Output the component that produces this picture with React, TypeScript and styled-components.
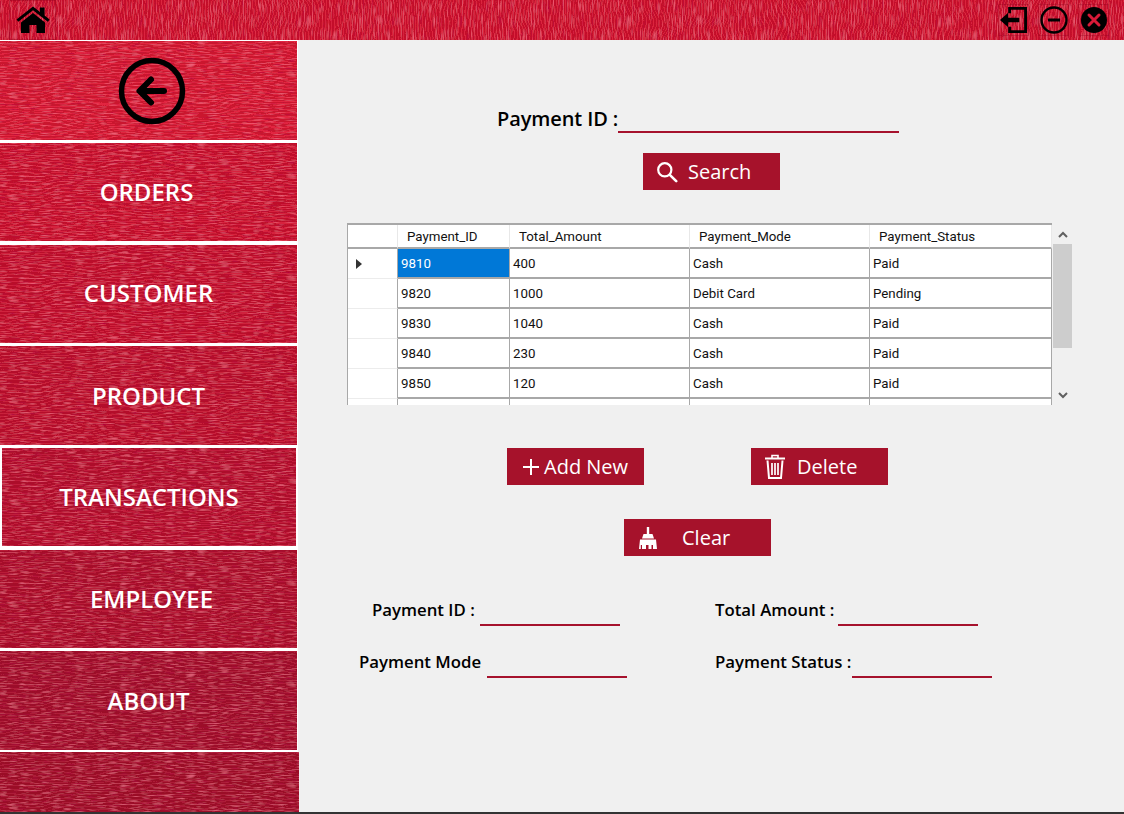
import React from 'react';
import styled, { createGlobalStyle } from 'styled-components';

const GlobalStyle = createGlobalStyle`
  html, body {
    margin: 0;
    padding: 0;
    background: #f0f0f0;
    font-family: "Open Sans", sans-serif;
  }
  * { box-sizing: border-box; }
`;

const menu = [
  { label: '', h: 99, gap: 1, tone: '#e01733', shift: 3, lift: 0 },
  { label: 'ORDERS', h: 98, gap: 3, tone: '#d41431', shift: -2, lift: -1 },
  { label: 'CUSTOMER', h: 98, gap: 4, tone: '#cd1330', shift: 0, lift: -2 },
  { label: 'PRODUCT', h: 99, gap: 3, tone: '#c6122f', shift: 0, lift: 0 },
  { label: 'TRANSACTIONS', h: 98, gap: 3, tone: '#be112e', shift: 0, lift: -1, active: true },
  { label: 'EMPLOYEE', h: 98, gap: 4, tone: '#b5112d', shift: 3, lift: -1 },
  { label: 'ABOUT', h: 99, gap: 3, tone: '#aa112d', shift: 0, lift: 0 },
];

const rows = [
  ['9810', '400', 'Cash', 'Paid'],
  ['9820', '1000', 'Debit Card', 'Pending'],
  ['9830', '1040', 'Cash', 'Paid'],
  ['9840', '230', 'Cash', 'Paid'],
  ['9850', '120', 'Cash', 'Paid'],
  ['', '', '', ''],
];

const grainStages = (freq: string, seed: number) => (
  <>
    <feTurbulence type="fractalNoise" baseFrequency="0.014 0.03" numOctaves="2" seed={seed} result="wave" />
    <feDisplacementMap in="SourceGraphic" in2="wave" scale="22" xChannelSelector="R" yChannelSelector="G" result="ridges" />
    <feTurbulence type="fractalNoise" baseFrequency={freq} numOctaves="2" seed={seed + 2} result="n" />
    <feColorMatrix in="n" type="matrix" values="0 0 0 0 1  0 0 0 0 0.2  0 0 0 0 0.3  1.5 0 0 0 -0.78" result="light" />
    <feColorMatrix in="n" type="matrix" values="0 0 0 0 0.45  0 0 0 0 0  0 0 0 0 0.06  0 -1.6 0 0 0.72" result="dark" />
    <feMerge>
      <feMergeNode in="ridges" />
      <feMergeNode in="dark" />
      <feMergeNode in="light" />
    </feMerge>
  </>
);

const App = () => {
  return (
    <>
      <GlobalStyle />
      <Filters aria-hidden="true">
        <filter id="grainH" x="0" y="0" width="100%" height="100%">
          {grainStages('0.09 0.8', 7)}
        </filter>
        <filter id="grainV" x="0" y="0" width="100%" height="100%">
          {grainStages('0.8 0.07', 3)}
        </filter>
      </Filters>
      <Window>
        <TopBar>
          <HomeButton>
            <svg width="36" height="30" viewBox="0 0 36 30">
              <path d="M1.500 15.500 18 2.500l7 5.400V3.500h4.600v8l5 4-1.800 2.200L18 6.200 3.300 17.700z" fill="#000" />
              <path d="M6 18.500 18 9l12 9.500V29h-8.500v-8h-7v8H6z" fill="#000" />
            </svg>
          </HomeButton>
          <WindowButtons>
            <WinButton>
              <svg width="30" height="28" viewBox="0 0 30 28">
                <path d="M11 7V2h16.500v24H11v-5" fill="none" stroke="#000" strokeWidth="3" />
                <path d="M1 14 9.500 6.500v5.300H21v4.400H9.500v5.300z" fill="#000" />
              </svg>
            </WinButton>
            <WinButton>
              <svg width="28" height="28" viewBox="0 0 28 28" fill="none" stroke="#000">
                <circle cx="14" cy="14" r="12.500" strokeWidth="2.400" />
                <path d="M8 14h12" strokeWidth="3" />
              </svg>
            </WinButton>
            <WinButton>
              <svg width="28" height="28" viewBox="0 0 28 28">
                <circle cx="14" cy="14" r="13" fill="#000" />
                <path d="m9 9 10 10M19 9 9 19" stroke="#d81a38" strokeWidth="3" strokeLinecap="round" />
              </svg>
            </WinButton>
          </WindowButtons>
        </TopBar>
        <Body>
          <Sidebar>
            {menu.map((item, i) => (
              <MenuItem key={i} $h={item.h} $gap={item.gap} $tone={item.tone} $active={item.active} $shift={item.shift} $lift={item.lift}>
                {item.label ? (
                  <span>{item.label}</span>
                ) : (
                  <svg width="68" height="68" viewBox="0 0 68 68" fill="none" stroke="#000">
                    <circle cx="34" cy="34" r="30.500" strokeWidth="5.500" />
                    <path d="M46 34H25" strokeWidth="6" strokeLinecap="round" />
                    <path d="M33 22.500 21.500 34 33 45.500" strokeWidth="6" strokeLinecap="round" strokeLinejoin="round" />
                  </svg>
                )}
              </MenuItem>
            ))}
            <SidebarEnd />
          </Sidebar>
          <Main>
            <SearchRow>
              <SearchLabel>Payment ID :</SearchLabel>
              <SearchLine />
            </SearchRow>
            <SearchButton>
              <svg width="22" height="22" viewBox="0 0 22 22" fill="none" stroke="#fff" strokeWidth="2.200">
                <circle cx="8.800" cy="8.800" r="6.600" />
                <path d="m13.800 13.800 6.400 6.400" strokeLinecap="round" strokeWidth="2.600" />
              </svg>
              Search
            </SearchButton>
            <GridArea>
              <GridFrame>
                <Table>
                  <colgroup>
                    <col width="50" />
                    <col width="112" />
                    <col width="180" />
                    <col width="180" />
                    <col width="182" />
                  </colgroup>
                  <thead>
                    <tr>
                      <HeadCell />
                      <HeadCell>Payment_ID</HeadCell>
                      <HeadCell>Total_Amount</HeadCell>
                      <HeadCell>Payment_Mode</HeadCell>
                      <HeadCell>Payment_Status</HeadCell>
                    </tr>
                  </thead>
                  <tbody>
                    {rows.map((row, i) => (
                      <tr key={i}>
                        <RowHeader>{i === 0 && <RowPointer />}</RowHeader>
                        {row.map((cell, j) => (
                          <Cell key={j} $selected={i === 0 && j === 0}>{cell}</Cell>
                        ))}
                      </tr>
                    ))}
                  </tbody>
                </Table>
              </GridFrame>
              <ScrollBar>
                <svg width="12" height="8" viewBox="0 0 12 8" fill="none" stroke="#606060" strokeWidth="2">
                  <path d="m2 6 4-4 4 4" />
                </svg>
                <ScrollThumb />
                <svg width="12" height="8" viewBox="0 0 12 8" fill="none" stroke="#606060" strokeWidth="2">
                  <path d="m2 2 4 4 4-4" />
                </svg>
              </ScrollBar>
            </GridArea>
            <ActionRow>
              <ActionButton>
                <svg width="16" height="16" viewBox="0 0 16 16" stroke="#fff" strokeWidth="2">
                  <path d="M8 0v16M0 8h16" />
                </svg>
                Add New
              </ActionButton>
              <ActionButton $gap={12} $pad={14}>
                <svg width="20" height="25" viewBox="0 0 20 25" fill="none" stroke="#fff">
                  <path d="M0 4.500h20" strokeWidth="2" />
                  <path d="M7 4V1.500h6V4" strokeWidth="1.600" />
                  <path d="M2.500 6.500 4 24h12l1.500-17.500" strokeWidth="2" />
                  <path d="M7 9v12M10 9v12M13 9v12" strokeWidth="1.700" />
                </svg>
                Delete
              </ActionButton>
            </ActionRow>
            <ClearButton>
              <svg width="18" height="22" viewBox="0 0 18 22" fill="#fff">
                <path d="M7.800 0h2.400v7H7.800z" />
                <path d="M4.500 7h9l1.500 4.500H3z" />
                <path d="M1 12.500h16l1 9.500h-4v-4h-1.500v4h-3v-4H7v4H3v-4H1.800v4H0z" />
              </svg>
              Clear
            </ClearButton>
            <Fields>
              <Field $indent={13}>
                <FieldLabel $w={108}>Payment ID :</FieldLabel>
                <FieldLine />
              </Field>
              <Field>
                <FieldLabel $w={123}>Total Amount :</FieldLabel>
                <FieldLine />
              </Field>
              <Field>
                <FieldLabel $w={128}>Payment Mode</FieldLabel>
                <FieldLine />
              </Field>
              <Field>
                <FieldLabel $w={137}>Payment Status :</FieldLabel>
                <FieldLine />
              </Field>
            </Fields>
          </Main>
        </Body>
      </Window>
    </>
  );
};

export default App;

const Filters = styled.svg`
  position: absolute;
  width: 0;
  height: 0;
`;

const Window = styled.div`
  width: 1124px;
  height: 814px;
  display: flex;
  flex-direction: column;
  overflow: hidden;
  background: #f0f0f0;
  border-bottom: 2px solid #333;
`;

const TopBar = styled.header`
  position: relative;
  z-index: 0;
  flex: none;
  height: 40px;
  display: flex;
  align-items: center;
  justify-content: space-between;
  padding: 0 15px 0 9px;
  overflow: hidden;

  &::before {
    content: "";
    position: absolute;
    inset: -14px;
    z-index: -1;
    background:
      repeating-linear-gradient(90deg, rgba(255, 255, 255, 0.07) 0 1px, rgba(70, 0, 15, 0.14) 1px 3px),
      #d8142f;
    filter: url(#grainV);
  }
`;

const HomeButton = styled.div`
  width: 47px;
  height: 40px;
  display: flex;
  align-items: center;
  justify-content: center;
  border: 1px solid rgba(140, 0, 25, 0.35);
  svg { margin-top: -2px; }
`;

const WindowButtons = styled.div`
  display: flex;
  gap: 9px;
`;

const WinButton = styled.div`
  width: 31px;
  height: 32px;
  display: flex;
  align-items: center;
  justify-content: center;
  border: 1px solid rgba(140, 0, 25, 0.3);
`;

const Body = styled.div`
  flex: 1;
  display: flex;
  min-height: 0;
`;

const Sidebar = styled.nav`
  flex: none;
  width: 299px;
  display: flex;
  flex-direction: column;
  background: linear-gradient(#fff, #fff) left / 298px 100% no-repeat;
`;

const MenuItem = styled.div<{ $h: number; $gap: number; $tone: string; $active?: boolean; $shift: number; $lift: number }>`
  position: relative;
  z-index: 0;
  flex: none;
  width: ${p => (p.$active ? 294 : 297)}px;
  height: ${p => p.$h}px;
  margin-top: ${p => p.$gap}px;
  margin-left: ${p => (p.$active ? 2 : 0)}px;
  display: flex;
  align-items: center;
  justify-content: center;
  overflow: hidden;
  color: #fff;
  font-size: 24px;
  font-weight: 600;

  &::before {
    content: "";
    position: absolute;
    inset: -14px;
    z-index: -1;
    background:
      repeating-linear-gradient(0deg, rgba(255, 255, 255, 0.06) 0 1px, rgba(70, 0, 15, 0.14) 1px 3px),
      ${p => p.$tone};
    filter: url(#grainH);
  }

  span, svg {
    transform: translate(${p => p.$shift}px, ${p => p.$lift}px);
  }
`;

const SidebarEnd = styled.div`
  position: relative;
  z-index: 0;
  flex: 1;
  width: 299px;
  margin-top: 2px;
  overflow: hidden;

  &::before {
    content: "";
    position: absolute;
    inset: -14px;
    z-index: -1;
    background:
      repeating-linear-gradient(0deg, rgba(255, 255, 255, 0.06) 0 1px, rgba(70, 0, 15, 0.14) 1px 3px),
      #a8112c;
    filter: url(#grainH);
  }
`;

const Main = styled.main`
  flex: 1;
  display: flex;
  flex-direction: column;
  align-items: flex-start;
  background: #f0f0f0;
`;

const SearchRow = styled.div`
  display: flex;
  align-items: flex-end;
  height: 28px;
  margin: 65px 0 0 198px;
`;

const SearchLabel = styled.label`
  width: 121px;
  font-size: 20px;
  line-height: 28px;
  font-weight: 600;
  letter-spacing: -0.1px;
  color: #000;
  white-space: nowrap;
`;

const SearchLine = styled.div`
  width: 281px;
  height: 2px;
  background: #a6122d;
`;

const Button = styled.button<{ $gap?: number; $pad?: number }>`
  display: flex;
  align-items: center;
  flex: none;
  height: 37px;
  padding: 0 0 0 ${p => p.$pad ?? 13}px;
  gap: ${p => p.$gap ?? 10}px;
  border: none;
  background: #a6122b;
  color: #fff;
  font-family: "Open Sans", sans-serif;
  font-size: 20px;
  font-weight: 400;
  white-space: nowrap;
`;

const SearchButton = styled(Button)`
  width: 137px;
  margin: 20px 0 0 344px;
`;

const GridArea = styled.div`
  display: flex;
  height: 182px;
  margin: 33px 0 0 48px;
`;

const GridFrame = styled.div`
  width: 705px;
  height: 182px;
  overflow: hidden;
  border-top: 2px solid #a8a8a8;
  border-left: 1px solid #a8a8a8;
  background: #fff;
`;

const Table = styled.table`
  width: 704px;
  table-layout: fixed;
  border-collapse: separate;
  border-spacing: 0;
  font-family: Roboto, "Liberation Sans", sans-serif;
  font-size: 13.3px;
  color: #111;
`;

const HeadCell = styled.th`
  height: 24px;
  padding: 0 0 0 9px;
  text-align: left;
  font-weight: 400;
  background: #fff;
  border-right: 1px solid #e8e8e8;
  border-bottom: 2px solid #a8a8a8;
`;

const RowHeader = styled.td`
  height: 30px;
  padding: 0 0 0 8px;
  background: #fff;
  border-right: 1px solid #a8a8a8;
  border-bottom: 1px solid #ececec;
`;

const RowPointer = styled.div`
  width: 0;
  height: 0;
  border-left: 6px solid #333;
  border-top: 5.500px solid transparent;
  border-bottom: 5.500px solid transparent;
`;

const Cell = styled.td<{ $selected?: boolean }>`
  height: 30px;
  padding: 0 0 0 3px;
  background: ${p => (p.$selected ? '#0078d7' : '#fff')};
  color: ${p => (p.$selected ? '#fff' : '#111')};
  border-right: 1px solid #a8a8a8;
  border-bottom: 2px solid #a8a8a8;
`;

const ScrollBar = styled.div`
  width: 19px;
  margin-left: 1px;
  display: flex;
  flex-direction: column;
  align-items: center;
  justify-content: space-between;
  padding: 8px 0 6px;
`;

const ScrollThumb = styled.div`
  align-self: stretch;
  height: 104px;
  margin: 5px 0 auto;
  background: #cdcdcd;
`;

const ActionRow = styled.div`
  display: flex;
  gap: 107px;
  margin: 43px 0 0 208px;
`;

const ActionButton = styled(Button)`
  width: 137px;
  padding-left: ${p => p.$pad ?? 16}px;
  gap: ${p => p.$gap ?? 5}px;
`;

const ClearButton = styled(Button)`
  width: 147px;
  margin: 34px 0 0 325px;
  padding-left: 15px;
  gap: 25px;
`;

const Fields = styled.div`
  display: grid;
  grid-template-columns: 356px auto;
  row-gap: 24px;
  margin: 42px 0 0 60px;
`;

const Field = styled.div<{ $indent?: number }>`
  display: flex;
  align-items: flex-end;
  height: 28px;
  margin-left: ${p => p.$indent ?? 0}px;
`;

const FieldLabel = styled.label<{ $w: number }>`
  align-self: flex-start;
  width: ${p => p.$w}px;
  font-size: 16.8px;
  line-height: 24px;
  font-weight: 600;
  color: #000;
  white-space: nowrap;
`;

const FieldLine = styled.div`
  width: 140px;
  height: 2px;
  background: #a6122d;
`;
